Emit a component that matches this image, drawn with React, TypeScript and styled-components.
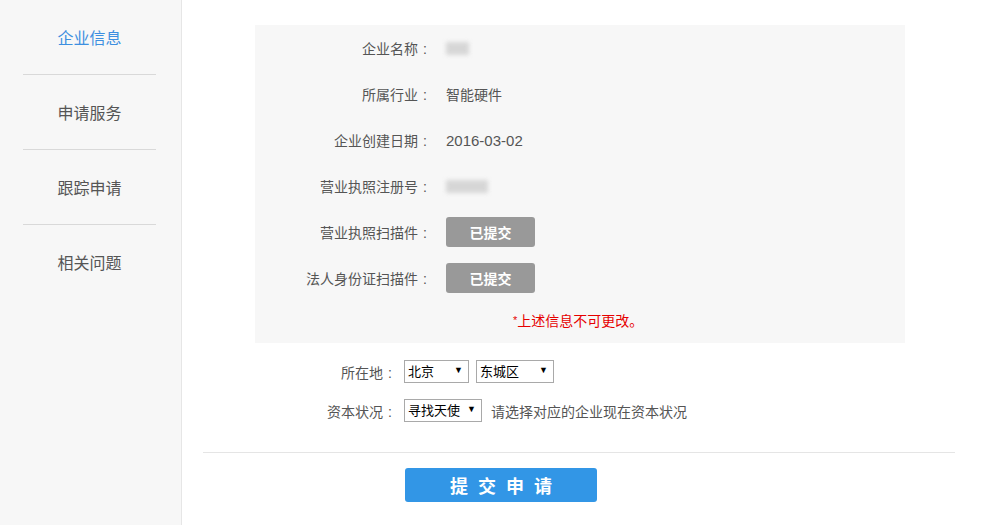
import styled, { createGlobalStyle } from 'styled-components';

const Global = createGlobalStyle`
  html, body {
    margin: 0;
    padding: 0;
    background: #fff;
  }
  body {
    font-family: "Liberation Sans", "Noto Sans CJK SC", sans-serif;
    font-size: 14px;
    color: #555;
  }
`;

const Page = styled.div`
  display: flex;
  height: 525px;
  overflow: hidden;
`;

const Sidebar = styled.nav`
  width: 181px;
  flex-shrink: 0;
  background: #f7f7f7;
  border-right: 1px solid #e6e6e6;
`;

const NavItem = styled.a<{ $active?: boolean }>`
  display: block;
  margin: 0 25px 0 23px;
  padding: 29px 0 25px;
  line-height: 20px;
  font-size: 16px;
  text-align: center;
  color: ${(p) => (p.$active ? '#3d8fe0' : '#555')};
  text-decoration: none;
  border-bottom: 1px solid #d9d9d9;
  cursor: pointer;
  &:last-child { border-bottom-color: transparent; }
`;

const Main = styled.main`
  flex: 1;
  padding: 25px 40px 0 21px;
`;

const InfoPanel = styled.section`
  margin-left: 52px;
  width: 650px;
  background: #f7f7f7;
  padding-bottom: 12px;
`;

const Row = styled.div`
  display: flex;
  align-items: center;
  height: 46px;
`;

const Label = styled.span<{ $w?: number }>`
  width: ${(p) => p.$w ?? 172}px;
  flex-shrink: 0;
  text-align: right;
  color: #555;
  &::after {
    content: ':';
    margin-left: 5px;
  }
`;

const FormLabel = styled(Label)`
  margin-right: 5px;
`;

const Value = styled.span<{ $num?: boolean }>`
  margin-left: 19px;
  color: #555;
  font-size: ${(p) => (p.$num ? 15 : 14)}px;
`;

const Hidden = styled.span<{ $w: number }>`
  display: inline-block;
  margin-left: 19px;
  width: ${(p) => p.$w}px;
  height: 13px;
  background: #cfcfcf;
  filter: blur(2px);
  opacity: 0.8;
`;

const DoneButton = styled.button`
  margin-left: 19px;
  width: 89px;
  height: 30px;
  border: none;
  border-radius: 3px;
  background: #999;
  color: #fff;
  font-family: inherit;
  font-size: 14px;
  font-weight: bold;
`;

const Note = styled.p`
  margin: 9px 0 0 258px;
  line-height: 20px;
  color: #e60000;
  font-size: 14px;
  span { font-size: 11px; vertical-align: 2px; }
`;

const Form = styled.div`
  padding-top: 9px;
`;

const FormRow = styled.div`
  display: flex;
  align-items: center;
  gap: 7px;
  height: 39px;
  margin-left: 52px;
`;

const SelectWrap = styled.div<{ $w: number }>`
  position: relative;
  width: ${(p) => p.$w}px;
  height: 23px;
`;

const Select = styled.select`
  appearance: none;
  width: 100%;
  height: 100%;
  box-sizing: border-box;
  border: 1px solid #a9a9a9;
  background: #fff;
  padding: 0 14px 0 3px;
  font-family: inherit;
  font-size: 13px;
  font-weight: normal;
  color: #000;
  border-radius: 0;
  outline: none;
`;

const Arrow = styled.span`
  position: absolute;
  right: 6px;
  top: 5px;
  font-size: 9px;
  color: #000;
  pointer-events: none;
`;

const Hint = styled.span`
  margin-left: 2px;
  color: #555;
`;

const Divider = styled.hr`
  border: none;
  border-top: 1px solid #e5e5e5;
  margin: 22px 0 0;
`;

const Submit = styled.button`
  display: block;
  margin: 15px 0 0 202px;
  width: 192px;
  height: 34px;
  border: none;
  border-radius: 3px;
  background: #3296e6;
  color: #fff;
  font-family: inherit;
  font-size: 18px;
  font-weight: bold;
  letter-spacing: 10px;
  text-indent: 10px;
`;

function Dropdown({ width, options }: { width: number; options: string[] }) {
  return (
    <SelectWrap $w={width}>
      <Select defaultValue={options[0]}>
        {options.map((o) => (
          <option key={o}>{o}</option>
        ))}
      </Select>
      <Arrow>▼</Arrow>
    </SelectWrap>
  );
}

export default function App() {
  return (
    <Page>
      <Global />
      <Sidebar>
        <NavItem $active>企业信息</NavItem>
        <NavItem>申请服务</NavItem>
        <NavItem>跟踪申请</NavItem>
        <NavItem>相关问题</NavItem>
      </Sidebar>
      <Main>
        <InfoPanel>
          <Row>
            <Label>企业名称</Label>
            <Hidden $w={23} />
          </Row>
          <Row>
            <Label>所属行业</Label>
            <Value>智能硬件</Value>
          </Row>
          <Row>
            <Label>企业创建日期</Label>
            <Value $num>2016-03-02</Value>
          </Row>
          <Row>
            <Label>营业执照注册号</Label>
            <Hidden $w={42} />
          </Row>
          <Row>
            <Label>营业执照扫描件</Label>
            <DoneButton>已提交</DoneButton>
          </Row>
          <Row>
            <Label>法人身份证扫描件</Label>
            <DoneButton>已提交</DoneButton>
          </Row>
          <Note>
            <span>*</span>上述信息不可更改。
          </Note>
        </InfoPanel>
        <Form>
          <FormRow>
            <FormLabel $w={137}>所在地</FormLabel>
            <Dropdown width={65} options={['北京', '上海', '广州']} />
            <Dropdown width={78} options={['东城区', '西城区', '朝阳区']} />
          </FormRow>
          <FormRow>
            <FormLabel $w={137}>资本状况</FormLabel>
            <Dropdown width={78} options={['寻找天使', '天使轮', 'A轮']} />
            <Hint>请选择对应的企业现在资本状况</Hint>
          </FormRow>
        </Form>
        <Divider />
        <Submit>提交申请</Submit>
      </Main>
    </Page>
  );
}
